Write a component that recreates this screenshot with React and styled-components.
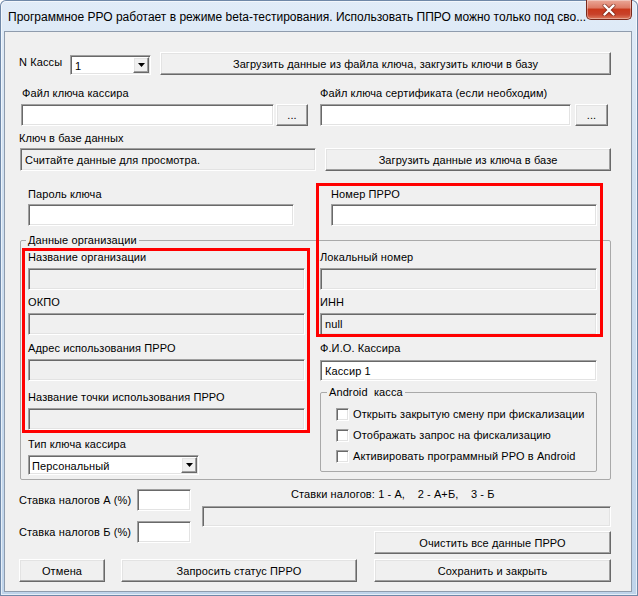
import React from "react";
import styled, { createGlobalStyle, css } from "styled-components";

const UI = `"Liberation Sans", Arial, sans-serif`;

const GlobalStyle = createGlobalStyle`
  html, body {
    margin: 0;
    padding: 0;
    background: #ffffff;
  }
  body {
    width: 638px;
    height: 596px;
    overflow: hidden;
    font-family: ${UI};
  }
`;

/* classic 3D bevels */
const sunken = css`
  box-sizing: border-box;
  border: 1px solid;
  border-color: #a0a0a0 #ffffff #ffffff #a0a0a0;
  box-shadow: inset 1px 1px 0 #696969, inset -1px -1px 0 #e3e3e3;
`;

const raised = css`
  box-sizing: border-box;
  border: 1px solid;
  border-color: #ffffff #696969 #696969 #ffffff;
  box-shadow: inset -1px -1px 0 #a0a0a0, inset 1px 1px 0 #e3e3e3;
`;

const Window = styled.div`
  width: 638px;
  height: 596px;
  box-sizing: border-box;
  display: flex;
  flex-direction: column;
  border-radius: 6px 6px 0 0;
  background: linear-gradient(180deg, #e1ecf8 0%, #d0e0f1 30%, #bfd4eb 100%);
  box-shadow: inset 0 0 0 1px #6f88a8, inset 0 0 0 2px rgba(255, 255, 255, 0.6);
  overflow: hidden;
`;

const TitleBar = styled.div`
  height: 31px;
  flex: none;
  display: flex;
  align-items: flex-start;
  padding: 0 6px 0 8px;
`;

const Caption = styled.div`
  flex: 1;
  min-width: 0;
  margin-top: 10px;
  font: 12px/15px ${UI};
  color: #000;
  white-space: nowrap;
`;

const CloseButton = styled.button`
  width: 46px;
  height: 20px;
  flex: none;
  padding: 0;
  border: 1px solid #7a2a1c;
  border-top: none;
  border-radius: 0 0 5px 5px;
  background: linear-gradient(
    180deg,
    #eaa898 0%,
    #de7c66 40%,
    #c9391c 50%,
    #c8412a 75%,
    #dc7a5d 100%
  );
  box-shadow: inset 0 0 0 1px rgba(255, 255, 255, 0.35);
  display: flex;
  align-items: center;
  justify-content: center;
`;

const Client = styled.div`
  position: relative;
  flex: 1;
  margin: 0 6px 4px 4px;
  padding: 20px 20px 0 14px;
  background: #f0f0f0;
  border: 1px solid #8f9cad;
  font: 11px/13px ${UI};
  color: #000;
`;

const Label = styled.div`
  font: 11px/13px ${UI};
  letter-spacing: 0.1px;
  white-space: pre;
  margin-top: ${(p) => p.$mt || 0}px;
  margin-left: ${(p) => p.$ml || 0}px;
  width: ${(p) => (p.$w ? `${p.$w}px` : "auto")};
  flex: none;
`;

const TextBox = styled.input`
  ${sunken};
  display: block;
  width: ${(p) => p.$w}px;
  height: ${(p) => p.$h || 22}px;
  margin: ${(p) => p.$mt || 0}px 0 0 ${(p) => p.$ml || 0}px;
  padding: 0 4px;
  font: 11px ${UI};
  letter-spacing: 0.1px;
  color: #000;
  background: ${(p) => (p.readOnly ? "#f0f0f0" : "#ffffff")};
  outline: none;
  flex: none;
`;

const Button = styled.button`
  ${raised};
  display: block;
  width: ${(p) => (p.$w ? `${p.$w}px` : "auto")};
  flex: ${(p) => (p.$w ? "none" : "1")};
  height: ${(p) => p.$h || 23}px;
  margin: ${(p) => p.$mt || 0}px 0 0 ${(p) => p.$ml || 0}px;
  padding: 0;
  background: #f0f0f0;
  font: 11px ${UI};
  letter-spacing: 0.1px;
  color: #000;
  align-self: ${(p) => p.$align || "auto"};
`;

const Combo = styled.div`
  ${sunken};
  width: ${(p) => p.$w}px;
  height: 20px;
  margin: ${(p) => p.$mt || 0}px 0 0 ${(p) => p.$ml || 0}px;
  padding: 1px;
  background: #ffffff;
  display: flex;
  align-items: center;
  flex: none;
`;

const ComboText = styled.span`
  flex: 1;
  padding-left: ${(p) => p.$pl || 3}px;
  font: 11px/13px ${UI};
  letter-spacing: 0.1px;
  margin-top: 2px;
`;

const DropButton = styled.span`
  ${raised};
  width: 16px;
  height: 16px;
  background: #f0f0f0;
  display: flex;
  align-items: center;
  justify-content: center;
`;

const Row = styled.div`
  display: flex;
  align-items: flex-start;
  margin-top: ${(p) => p.$mt || 0}px;
`;

const TwoCol = styled.div`
  display: grid;
  grid-template-columns: 297px 291px;
  column-gap: 4px;
  align-items: end;
  margin-top: ${(p) => p.$mt || 0}px;
`;

const Cell = styled.div`
  display: flex;
  flex-direction: column;
  padding-left: ${(p) => p.$pl || 0}px;
`;

const InputLine = styled.div`
  display: flex;
  gap: ${(p) => p.$gap || 0}px;
  margin-top: ${(p) => p.$mt || 0}px;
`;

const GroupBox = styled.fieldset`
  margin: ${(p) => p.$mt || 0}px 0 0 ${(p) => p.$ml || 0}px;
  width: ${(p) => p.$w}px;
  box-sizing: border-box;
  padding: ${(p) => p.$pad};
  border: 1px solid #a9a9a9;
  border-radius: 2px;
  min-inline-size: 0;
`;

const Legend = styled.legend`
  padding: 0 2px;
  margin-left: ${(p) => p.$ml || 0}px;
  font: 11px/13px ${UI};
  letter-spacing: 0.1px;
  white-space: pre;
`;

const OrgGrid = styled.div`
  display: grid;
  grid-template-columns: 277px 277px;
  column-gap: 15px;
  align-items: start;
`;

const Column = styled.div`
  display: flex;
  flex-direction: column;
`;

const Field = styled.div`
  display: flex;
  flex-direction: column;
  margin-top: ${(p) => p.$mt || 0}px;
`;

const CheckRow = styled.label`
  display: flex;
  align-items: center;
  height: 16px;
  margin-top: ${(p) => p.$mt || 0}px;
  font: 11px/13px ${UI};
  letter-spacing: 0.1px;
`;

const CheckBox = styled.span`
  ${sunken};
  width: 13px;
  height: 13px;
  background: #ffffff;
  margin-right: 4px;
  flex: none;
`;

const BottomGrid = styled.div`
  display: grid;
  grid-template-columns: 183px 409px;
  margin-top: 8px;
`;

const RightStack = styled.div`
  display: flex;
  flex-direction: column;
`;

const Highlight = styled.div`
  position: absolute;
  box-sizing: border-box;
  border: 3px solid #ff0000;
  pointer-events: none;
  left: ${(p) => p.$x}px;
  top: ${(p) => p.$y}px;
  width: ${(p) => p.$w}px;
  height: ${(p) => p.$h}px;
`;

const Arrow = () => (
  <svg width="7" height="4" viewBox="0 0 7 4">
    <path d="M0 0h7L3.5 4z" fill="#000" />
  </svg>
);

const CloseGlyph = () => (
  <svg width="14" height="12" viewBox="0 0 14 12">
    <path
      d="M2.5 1.5L11.5 10.5M11.5 1.5L2.5 10.5"
      stroke="#5a1a10"
      strokeWidth="4"
      strokeLinecap="round"
      opacity="0.55"
    />
    <path
      d="M2.5 1.5L11.5 10.5M11.5 1.5L2.5 10.5"
      stroke="#ffffff"
      strokeWidth="2.4"
      strokeLinecap="round"
    />
  </svg>
);

const FieldBlock = ({ label, mt, gap = 4, value = "", readOnly, w = 277, h = 22 }) => (
  <Field $mt={mt}>
    <Label>{label}</Label>
    <TextBox $w={w} $h={h} $mt={gap} readOnly={readOnly} defaultValue={value} />
  </Field>
);

export default function App() {
  return (
    <>
      <GlobalStyle />
      <Window>
        <TitleBar>
          <Caption>
            Программное РРО работает в режиме beta-тестирования. Использовать ППРО можно только под сво...
          </Caption>
          <CloseButton aria-label="Закрыть">
            <CloseGlyph />
          </CloseButton>
        </TitleBar>

        <Client>
          <Row>
            <Label $w={51} $mt={4}>N Кассы</Label>
            <Combo $w={81} $mt={3}>
              <ComboText $pl={3}>1</ComboText>
              <DropButton>
                <Arrow />
              </DropButton>
            </Combo>
            <Button $ml={9}>Загрузить данные из файла ключа, закгузить ключи в базу</Button>
          </Row>

          <TwoCol $mt={12}>
            <Cell $pl={2}>
              <Label $ml={1}>Файл ключа кассира</Label>
              <InputLine $gap={2} $mt={4}>
                <TextBox $w={253} />
                <Button $w={32} $h={22}>...</Button>
              </InputLine>
            </Cell>
            <Cell>
              <Label>Файл ключа сертификата (если необходим)</Label>
              <InputLine $gap={4} $mt={4}>
                <TextBox $w={251} />
                <Button $w={33} $h={22}>...</Button>
              </InputLine>
            </Cell>
          </TwoCol>

          <TwoCol $mt={6}>
            <Cell>
              <Label>Ключ в базе данных</Label>
              <TextBox
                $w={296}
                $h={23}
                $mt={3}
                $ml={1}
                readOnly
                defaultValue="Считайте данные для просмотра."
              />
            </Cell>
            <Cell>
              <Button $w={286} $ml={5}>Загрузить данные из ключа в базе</Button>
            </Cell>
          </TwoCol>

          <TwoCol $mt={17}>
            <Cell $pl={9}>
              <Label>Пароль ключа</Label>
              <TextBox $w={266} $mt={3} />
            </Cell>
            <Cell $pl={11}>
              <Label>Номер ПРРО</Label>
              <TextBox $w={266} $mt={3} />
            </Cell>
          </TwoCol>

          <GroupBox $mt={8} $ml={1} $w={591} $pad="4px 13px 4px 7px">
            <Legend $ml={-2}>Данные организации</Legend>
            <OrgGrid>
              <Column>
                <FieldBlock label="Название организации" readOnly />
                <FieldBlock label="ОКПО" mt={6} readOnly />
                <FieldBlock label="Адрес использования ПРРО" mt={7} readOnly />
                <FieldBlock label="Название точки использования ПРРО" mt={10} readOnly />
                <Field $mt={8}>
                  <Label>Тип ключа кассира</Label>
                  <Combo $w={171} $mt={4}>
                    <ComboText $pl={2}>Персональный</ComboText>
                    <DropButton>
                      <Arrow />
                    </DropButton>
                  </Combo>
                </Field>
              </Column>
              <Column>
                <FieldBlock label="Локальный номер" readOnly />
                <FieldBlock label="ИНН" mt={6} readOnly value="null" />
                <FieldBlock label="Ф.И.О. Кассира" mt={7} gap={5} h={21} value="Кассир 1" />
                <GroupBox $mt={5} $w={277} $pad="7px 8px 7px 15px">
                  <Legend $ml={-9}>Android  касса</Legend>
                  <CheckRow>
                    <CheckBox />
                    Открыть закрытую смену при фискализации
                  </CheckRow>
                  <CheckRow $mt={5}>
                    <CheckBox />
                    Отображать запрос на фискализацию
                  </CheckRow>
                  <CheckRow $mt={5}>
                    <CheckBox />
                    Активировать программный РРО в Android
                  </CheckRow>
                </GroupBox>
              </Column>
            </OrgGrid>
          </GroupBox>

          <BottomGrid>
            <Column>
              <Row $mt={1}>
                <Label $w={118} $mt={5}>Ставка налогов А (%)</Label>
                <TextBox $w={54} />
              </Row>
              <Row $mt={10}>
                <Label $w={118} $mt={5}>Ставка налогов Б (%)</Label>
                <TextBox $w={54} />
              </Row>
            </Column>
            <RightStack>
              <Label $ml={89}>Ставки налогов: 1 - А,    2 - А+Б,    3 - Б</Label>
              <TextBox $w={409} $h={21} $mt={5} readOnly />
              <Button $w={237} $mt={4} $align="flex-end">Очистить все данные ПРРО</Button>
            </RightStack>
          </BottomGrid>

          <Row $mt={5}>
            <Button $w={86}>Отмена</Button>
            <Button $w={236} $ml={16}>Запросить статус ПРРО</Button>
            <Button $w={237} $ml={17}>Сохранить и закрыть</Button>
          </Row>

          <Highlight $x={17} $y={216} $w={288} $h={185} />
          <Highlight $x={311} $y={151} $w={287} $h={154} />
        </Client>
      </Window>
    </>
  );
}
